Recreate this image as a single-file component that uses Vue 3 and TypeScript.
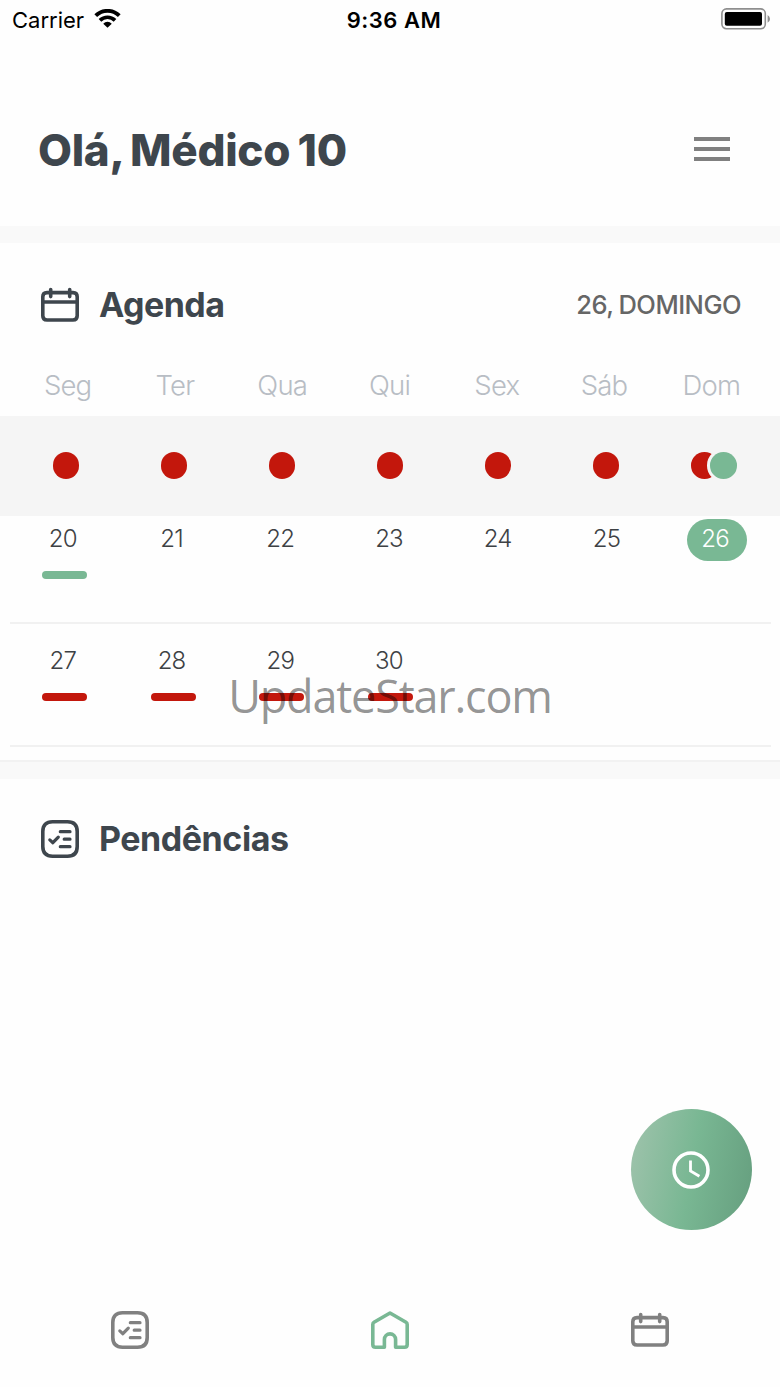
<template>
  <div class="screen">
    <div class="status-bar">
      <div class="carrier">
        <span class="carrier-name">Carrier</span>
        <svg class="wifi" width="27" height="20" viewBox="0 0 28 20">
          <path d="M14 19.2 L9.6 14.8 A6.2 6.2 0 0 1 18.4 14.8 Z" fill="#000" />
          <path d="M6.2 11.4 A11 11 0 0 1 21.8 11.4" fill="none" stroke="#000" stroke-width="3.8" />
          <path d="M1.8 6.6 A17.2 17.2 0 0 1 26.2 6.6" fill="none" stroke="#000" stroke-width="4" />
        </svg>
      </div>
      <span class="time">9:36 AM</span>
      <svg class="battery" width="50" height="22" viewBox="0 0 50 22">
        <rect x="0.9" y="0.9" width="43.4" height="19.8" rx="4.6" fill="none" stroke="#8e8e8e" stroke-width="1.6" />
        <rect x="3.8" y="4" width="37.2" height="13.8" rx="2" fill="#000" />
        <path d="M46.6 7 Q49 8.4 49 10.9 Q49 13.4 46.6 14.8 Z" fill="#8e8e8e" />
      </svg>
    </div>

    <header class="header">
      <h1>Olá, Médico 10</h1>
      <button class="menu" aria-label="Menu">
        <span></span>
        <span></span>
        <span></span>
      </button>
    </header>

    <section class="agenda">
      <div class="title">
        <svg class="icon" width="40" height="40" viewBox="0 0 40 40">
          <path :d="calendario" />
        </svg>
        <h2 class="agenda-title">Agenda</h2>
        <span class="today">26, DOMINGO</span>
      </div>

      <div class="weekdays">
        <span v-for="nome in diasSemana" :key="nome">{{ nome }}</span>
      </div>

      <div class="dots">
        <div v-for="(cores, i) in pontos" :key="i" class="dot-group">
          <i v-for="cor in cores" :key="cor" class="dot" :class="cor"></i>
        </div>
      </div>

      <div v-for="(semana, i) in semanas" :key="i" class="week">
        <div v-for="dia in semana" :key="dia.numero" class="day">
          <span class="number" :class="{ selected: dia.numero === selecionado }" @click="selecionado = dia.numero">
            {{ dia.numero }}
          </span>
          <i v-if="dia.marca" class="mark" :class="dia.marca"></i>
        </div>
      </div>
    </section>

    <section class="pendencias">
      <div class="title">
        <svg class="icon" width="40" height="40" viewBox="0 0 40 40">
          <path :d="lista" />
          <path :d="listaItens" class="thin" />
        </svg>
        <h2 class="pendencias-title">Pendências</h2>
      </div>
    </section>

    <button class="fab" aria-label="Horário">
      <svg width="40" height="40" viewBox="0 0 40 40">
        <circle cx="20" cy="20" r="17" />
        <path d="M19.5 10.5 V21 L28.4 26.3" class="hands" />
      </svg>
    </button>

    <nav class="tabs">
      <a class="tab">
        <svg class="icon" width="40" height="40" viewBox="0 0 40 40">
          <path :d="lista" />
          <path :d="listaItens" class="thin" />
        </svg>
      </a>
      <a class="tab active">
        <svg class="icon" width="40" height="40" viewBox="0 0 40 40">
          <path d="M20 3 L36 12.3 Q37.2 13 37.2 14.5 V34.5 Q37.2 37.2 34.5 37.2 H25.6 V29.5 A5.6 5.6 0 0 0 14.4 29.5 V37.2 H5.5 Q2.8 37.2 2.8 34.5 V14.5 Q2.8 13 4 12.3 Z" />
        </svg>
      </a>
      <a class="tab">
        <svg class="icon" width="40" height="40" viewBox="0 0 40 40">
          <path :d="calendario" />
        </svg>
      </a>
    </nav>

    <span class="watermark">UpdateStar.com</span>
  </div>
</template>

<script setup lang="ts">
import { ref } from "vue"

type Cor = "red" | "green"

interface Dia {
  numero: number
  marca?: Cor
}

const selecionado = ref(26)

const diasSemana = ["Seg", "Ter", "Qua", "Qui", "Sex", "Sáb", "Dom"]

const pontos: Cor[][] = [["red"], ["red"], ["red"], ["red"], ["red"], ["red"], ["red", "green"]]

const semanas: Dia[][] = [
  [
    { numero: 20, marca: "green" },
    { numero: 21 },
    { numero: 22 },
    { numero: 23 },
    { numero: 24 },
    { numero: 25 },
    { numero: 26 }
  ],
  [
    { numero: 27, marca: "red" },
    { numero: 28, marca: "red" },
    { numero: 29, marca: "red" },
    { numero: 30, marca: "red" }
  ]
]

// ícones usados mais de uma vez
const calendario =
  "M7 7.6 H33 Q37.2 7.6 37.2 11.8 V30.8 Q37.2 35 33 35 H7 Q2.8 35 2.8 30.8 V11.8 Q2.8 7.6 7 7.6 Z M2.8 17 H37.2 M10.7 4.6 V11.6 M29.7 4.6 V11.6"
const lista =
  "M12.5 2.8 H27.5 Q37.2 2.8 37.2 12.5 V27.5 Q37.2 37.2 27.5 37.2 H12.5 Q2.8 37.2 2.8 27.5 V12.5 Q2.8 2.8 12.5 2.8 Z"
const listaItens = "M20.3 12.7 H30 M24.2 20.2 H30 M20.3 27.7 H30 M9.8 20.9 L12.9 23.7 L18.3 18.1"
</script>

<style>
body {
  margin: 0;
  background: #fefefe;
}
</style>

<style scoped>
.screen {
  position: relative;
  width: 780px;
  height: 1387px;
  overflow: hidden;
  display: flex;
  flex-direction: column;
  background: #fefefe;
  font-family: Inter, "Liberation Sans", sans-serif;
  color: #3e464d;
}

h1,
h2 {
  margin: 0;
}

button {
  border: none;
  padding: 0;
  background: none;
  cursor: pointer;
}

.status-bar {
  height: 40px;
  flex: none;
  display: grid;
  grid-template-columns: 1fr auto 1fr;
  align-items: center;
  padding: 0 9px 0 12px;
  box-sizing: border-box;
  color: #000;
}

.carrier {
  display: flex;
  align-items: center;
  font-size: 22px;
  gap: 10px;
}

.wifi {
  margin-top: -2px;
}

.time {
  font-size: 22px;
  font-weight: 600;
  letter-spacing: 0.5px;
  margin-left: 5px;
}

.battery {
  justify-self: end;
  margin-top: -2px;
}

.header {
  height: 186px;
  flex: none;
  box-sizing: border-box;
  padding: 34px 50px 0 38px;
  display: flex;
  align-items: center;
  justify-content: space-between;
}

.header h1 {
  font-size: 44px;
  font-weight: 800;
  letter-spacing: -0.3px;
  word-spacing: -2px;
}

.menu {
  display: flex;
  flex-direction: column;
  gap: 6px;
  margin-top: -2px;
}

.menu span {
  width: 36px;
  height: 4px;
  background: #808080;
}

.agenda {
  height: 553px;
  flex: none;
  box-sizing: border-box;
  border-top: 17px solid #f9f9f9;
  border-bottom: 17px solid #f9f9f9;
  box-shadow: inset 0 -2px #f2f2f2;
}

.title {
  display: flex;
  align-items: center;
  height: 124px;
  padding: 0 39px 0 40px;
}

.title h2 {
  font-size: 34px;
  font-weight: 700;
  margin: -1px 0 0 19px;
}

.icon {
  flex: none;
  fill: none;
  stroke: currentColor;
  stroke-width: 3.6;
  stroke-linecap: round;
  stroke-linejoin: round;
}

.thin {
  stroke-width: 3.2;
}

.agenda-title {
  letter-spacing: -0.55px;
}

.pendencias-title {
  letter-spacing: -0.45px;
}

.today {
  margin: -2px 0 0 auto;
  font-size: 25.5px;
  font-weight: 500;
  letter-spacing: -0.5px;
  word-spacing: -1px;
  color: #666;
}

.weekdays {
  height: 49px;
  display: grid;
  grid-template-columns: repeat(7, 1fr);
  padding: 0 15px 0 14px;
  font-size: 27.5px;
  font-weight: 300;
  line-height: 37px;
  letter-spacing: -0.8px;
  text-align: center;
  color: #b8bdc4;
}

.dots {
  height: 100px;
  display: grid;
  grid-template-columns: repeat(7, 1fr);
  padding: 0 12px;
  background: #f5f5f5;
}

.dot-group {
  display: flex;
  align-items: center;
  justify-content: center;
}

.dot {
  width: 26.5px;
  height: 26.5px;
  border-radius: 50%;
  margin-bottom: 1px;
}

.dot + .dot {
  margin-left: -7.5px;
  box-shadow: 0 0 0 3px #f5f5f5;
}

.red {
  background: #c3170c;
}

.green {
  background: #79b894;
}

.week {
  height: 108px;
  box-sizing: border-box;
  margin: 0 9px 0 10px;
  border-bottom: 2px solid #f1f1f1;
  display: grid;
  grid-template-columns: repeat(7, 1fr);
  padding-top: 3px;
}

.week + .week {
  height: 123px;
  padding-top: 17px;
}

.day {
  display: flex;
  flex-direction: column;
  align-items: center;
}

.number {
  width: 60px;
  height: 42px;
  border-radius: 21px;
  font-size: 24px;
  font-weight: 300;
  line-height: 40px;
  letter-spacing: -0.8px;
  text-align: center;
  text-indent: -3px;
  color: #3d4144;
}

.number.selected {
  background: #79b894;
  color: #fff;
}

.mark {
  width: 45px;
  height: 8px;
  border-radius: 4px;
  margin-top: 10px;
}

.pendencias {
  flex: 1;
}

.pendencias .title {
  height: 120px;
}

.fab {
  position: absolute;
  right: 28.5px;
  top: 1109px;
  width: 121px;
  height: 121px;
  border-radius: 50%;
  background: linear-gradient(100deg, #9cc2aa 5%, #79b793 50%, #659e7e 100%);
  display: flex;
  align-items: center;
  justify-content: center;
}

.fab svg {
  fill: none;
  stroke: #fff;
  stroke-width: 3.6;
}

.fab .hands {
  stroke-width: 2.8;
}

.tabs {
  height: 114px;
  flex: none;
  display: grid;
  grid-template-columns: repeat(3, 1fr);
}

.tab {
  display: flex;
  align-items: center;
  justify-content: center;
  color: #808080;
}

.tab.active {
  color: #79b894;
}

.watermark {
  position: absolute;
  left: 0;
  right: 0;
  top: 665px;
  text-align: center;
  font-family: "Open Sans", "Noto Sans", sans-serif;
  font-size: 45px;
  line-height: 62px;
  letter-spacing: -1.2px;
  color: rgba(0, 0, 0, 0.43);
  pointer-events: none;
}
</style>
